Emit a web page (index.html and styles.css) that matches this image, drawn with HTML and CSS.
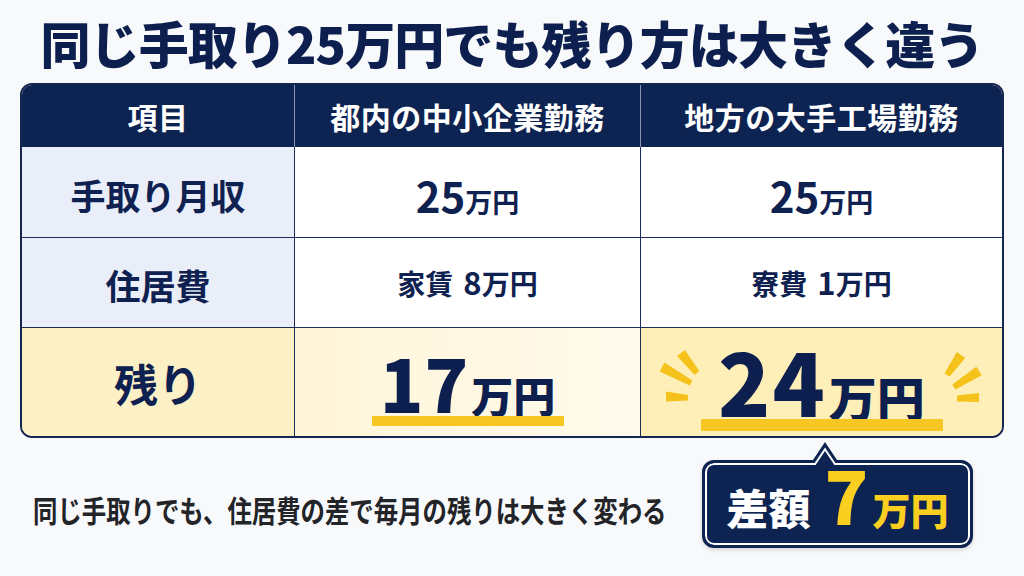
FILE: index.html
```html
<!DOCTYPE html>
<html lang="ja">
<head>
<meta charset="utf-8">
<title>同じ手取り25万円でも残り方は大きく違う</title>
<link rel="stylesheet" href="styles.css">
</head>
<body>
<div class="page">
  <h1 class="title">同じ手取り25万円でも残り方は大きく違う</h1>
  <div class="table">
    <div class="cell head corner-tl">項目</div>
    <div class="cell head">都内の中小企業勤務</div>
    <div class="cell head last corner-tr">地方の大手工場勤務</div>

    <div class="cell label">手取り月収</div>
    <div class="cell val"><span class="num">25</span><span class="unit">万円</span></div>
    <div class="cell val last"><span class="num">25</span><span class="unit">万円</span></div>

    <div class="cell label">住居費</div>
    <div class="cell val small">家賃<span class="num-s">8</span>万円</div>
    <div class="cell val small last">寮費<span class="num-s">1</span>万円</div>

    <div class="cell label rest bottom-row corner-bl">残り</div>
    <div class="cell rest-a bottom-row">
      <div class="big big17"><span class="n">17</span><span class="u">万円</span></div>
      <div class="bar bar17"></div>
    </div>
    <div class="cell rest-b bottom-row last corner-br">
      <svg class="burst" width="360" height="108" viewBox="0 0 360 108" aria-hidden="true">
        <g fill="#f5c21b">
          <polygon points="36.1,28.1 43.9,21.9 58.3,43.1 53.7,46.9"/>
          <polygon points="23.4,34.6 51.4,52.4 48.6,57.6 18.6,43.4"/>
          <polygon points="25,63.5 47,67 47,72.5 25,73.5"/>
          <polygon points="315.9,24.1 324.1,29.9 308.5,48.7 303.5,45.3"/>
          <polygon points="335.3,38.8 340.7,47.2 314.6,61.5 311.4,56.5"/>
          <polygon points="316,67.5 338,65 338,74 316,73.5"/>
        </g>
      </svg>
      <div class="big big24"><span class="n">24</span><span class="u">万円</span></div>
      <div class="bar bar24"></div>
    </div>
  </div>

  <div class="footer">
    <p class="caption"><span class="caption-text">同じ手取りでも、住居費の差で毎月の残りは大きく変わる</span></p>
    <div class="badge">
      <svg class="pointer" width="32" height="27" viewBox="0 0 32 27" aria-hidden="true">
        <polygon points="0,19 4,19 16,1 28,19 32,19 32,27 0,27" fill="#0d2352"/>
        <path d="M0,23 L6.1,23 L16,8.2 L25.9,23 L32,23" fill="none" stroke="#ffffff" stroke-width="2"/>
      </svg>
      <div class="b-inner"><span class="b-label">差額</span><span class="b-num">7</span><span class="b-unit">万円</span></div>
    </div>
  </div>
</div>
</body>
</html>
```

FILE: styles.css
```css
* { box-sizing: border-box; }

html, body {
  margin: 0;
  padding: 0;
}

body {
  width: 1024px;
  height: 576px;
  overflow: hidden;
  background: #f8f9fb;
  font-family: "Noto Sans CJK JP", "Noto Sans", sans-serif;
  color: #0f2150;
}

.page {
  padding-top: 17px;
}

.title {
  margin: 0 0 16px;
  text-align: center;
  font-size: 50px;
  line-height: 50px;
  font-weight: 900;
  color: #0c1f4e;
  letter-spacing: -0.9px;
}

.table {
  margin: 0 20px;
  display: grid;
  grid-template-columns: 273px 346px 1fr;
  grid-template-rows: 62px 91px 90px 108px;
  border: 2px solid #14254f;
  border-radius: 12px;
  background: #ffffff;
}

.cell {
  display: flex;
  align-items: center;
  justify-content: center;
  border-right: 1.5px solid #1c2c57;
  border-bottom: 1.5px solid #1c2c57;
  font-weight: 700;
  color: #0f2150;
}

.cell.last { border-right: none; }
.cell.bottom-row { border-bottom: none; }

.corner-tl { border-top-left-radius: 10px; }
.corner-tr { border-top-right-radius: 10px; }
.corner-bl { border-bottom-left-radius: 10px; }
.corner-br { border-bottom-right-radius: 10px; }

.head {
  background: #0d2352;
  color: #ffffff;
  font-size: 30px;
  border-bottom: none;
  border-right: 1px solid #8b95b3;
  letter-spacing: 0.5px;
}

.label {
  background: #e9eef8;
  font-size: 35px;
  padding-top: 4px;
}

.val {
  background: #ffffff;
  align-items: baseline;
  padding-top: 27px;
}

.num {
  font-size: 42px;
  line-height: 1;
}

.unit {
  font-size: 27px;
  line-height: 1;
}

.small {
  font-size: 28px;
  line-height: 1;
  padding-top: 28px;
}

.num-s {
  font-size: 31px;
  margin-left: 10px;
}

.rest {
  background: #fcf0c6;
  font-size: 44px;
  padding-top: 2px;
}

.rest-a {
  background: linear-gradient(90deg, #fff5d8, #fffaec);
  flex-direction: column;
  padding-top: 6px;
}

.rest-b {
  position: relative;
  background: #fdefb7;
  flex-direction: column;
  padding-top: 2px;
}

.burst {
  position: absolute;
  left: 0;
  top: 0;
  z-index: 0;
}

.big {
  position: relative;
  z-index: 1;
  display: flex;
  align-items: baseline;
  line-height: 1.05;
  font-weight: 900;
  color: #0c1f4e;
}

.big17 .n { font-size: 72px; letter-spacing: 1px; }
.big17 .u { font-size: 42px; margin-left: 2px; }
.big24 .n { font-size: 86px; letter-spacing: 2px; }
.big24 .u { font-size: 48px; margin-left: 2px; }

.bar {
  position: relative;
  z-index: 1;
  background: #f6c623;
  border-radius: 1px;
}

.bar17 {
  width: 192px;
  height: 10px;
  margin-top: -3px;
}

.bar24 {
  width: 242px;
  height: 12px;
  margin-top: -6px;
}

.footer {
  display: flex;
  align-items: center;
  padding: 22px 51px 0 33px;
}

.caption {
  margin: 0;
  width: 640px;
  flex: none;
  white-space: nowrap;
  padding-top: 12px;
}

.caption-text {
  display: inline-block;
  font-size: 30px;
  line-height: 1;
  font-weight: 700;
  color: #222428;
  transform: scaleX(0.813);
  transform-origin: left center;
}

.badge {
  position: relative;
  margin-left: auto;
  width: 271px;
  height: 88px;
  flex: none;
  display: flex;
  align-items: center;
  justify-content: center;
  background: #0d2352;
  border: 3px solid #0d2352;
  border-radius: 12px;
  box-shadow: inset 0 0 0 2px #ffffff, 0 2px 4px rgba(0, 0, 0, 0.15);
}

.b-inner {
  display: flex;
  align-items: baseline;
  font-weight: 900;
  line-height: 1;
  padding-bottom: 20px;
}

.pointer {
  position: absolute;
  left: 104px;
  top: -22px;
}

.b-label {
  color: #ffffff;
  font-size: 42px;
  margin-right: 14px;
}

.b-num {
  color: #fbcf1f;
  font-size: 72px;
}

.b-unit {
  color: #fbcf1f;
  font-size: 38px;
  margin-left: 4px;
}
```
